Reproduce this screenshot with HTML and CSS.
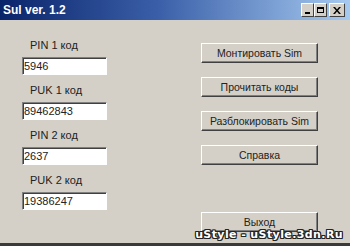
FILE: index.html
```html
<!DOCTYPE html>
<html lang="ru">
<head>
    <meta charset="UTF-8">
    <title>Sul ver. 1.2</title>
    <link rel="stylesheet" href="styles.css">
</head>
<body>
    <div class="window">
        <!-- Заголовок окна -->
        <div class="titlebar">
            <span class="title">Sul ver. 1.2</span>
            <div class="title-buttons">
                <span class="tbtn tbtn-min"><i></i></span>
                <span class="tbtn tbtn-max"><i></i></span>
                <span class="tbtn tbtn-close">
                    <svg width="8" height="7" viewBox="0 0 8 7"><path d="M0 0h2l2 2.5L6 0h2L5 3.5 8 7H6L4 4.5 2 7H0l3-3.5z" fill="#000"/></svg>
                </span>
            </div>
        </div>

        <div class="content">
            <!-- Поля с кодами -->
            <div class="fields">
                <div class="field">
                    <label>PIN 1 код</label>
                    <input class="code" type="text" value="5946">
                </div>
                <div class="field">
                    <label>PUK 1 код</label>
                    <input class="code" type="text" value="89462843">
                </div>
                <div class="field">
                    <label>PIN 2 код</label>
                    <input class="code" type="text" value="2637">
                </div>
                <div class="field">
                    <label>PUK 2 код</label>
                    <input class="code" type="text" value="19386247">
                </div>
            </div>

            <!-- Кнопки -->
            <div class="actions">
                <button class="win-button">Монтировать Sim</button>
                <button class="win-button">Прочитать коды</button>
                <button class="win-button">Разблокировать Sim</button>
                <button class="win-button">Справка</button>
                <button class="win-button exit">Выход</button>
            </div>
        </div>

        <div class="watermark">uStyle - uStyle.3dn.Ru</div>
    </div>
</body>
</html>
```

FILE: styles.css
```css
body {
    margin: 0;
    font-family: "Liberation Sans", Arial, sans-serif;
    font-size: 11px;
    background-color: #d4d0c8;
}
.window {
    position: relative;
    width: 350px;
    height: 246px;
    display: flex;
    flex-direction: column;
    background-color: #d4d0c8;
    border-bottom: 3px solid #3a3a3a;
    box-sizing: border-box;
}
.titlebar {
    height: 20px;
    display: flex;
    align-items: center;
    justify-content: space-between;
    background: linear-gradient(to right, #0a246a, #3a5fa8 45%, #a6caf0);
    padding: 0 5px 0 3px;
}
.title {
    color: #fff;
    font-weight: bold;
    font-size: 12px;
}
.title-buttons {
    display: flex;
    align-items: center;
}
.tbtn {
    width: 11px;
    height: 12px;
    background-color: #d4d0c8;
    border: 1px solid;
    border-color: #fff #404040 #404040 #fff;
    display: flex;
    align-items: center;
    justify-content: center;
}
.tbtn-min {
    align-items: flex-end;
}
.tbtn-min i {
    width: 5px;
    height: 2px;
    background: #000;
    margin-bottom: 2px;
}
.tbtn-max i {
    width: 7px;
    height: 6px;
    border: 1px solid #000;
    border-top-width: 2px;
    box-sizing: border-box;
}
.tbtn-close {
    width: 14px;
    margin-left: 2px;
}
.content {
    flex: 1;
    display: flex;
}
.fields {
    width: 85px;
    margin-left: 22px;
    padding-top: 18px;
    display: flex;
    flex-direction: column;
    gap: 8px;
}
.field {
    display: flex;
    flex-direction: column;
    gap: 5px;
}
.field label {
    height: 14px;
    line-height: 14px;
    padding-left: 8px;
    color: #222;
}
.code {
    height: 18px;
    width: 85px;
    box-sizing: border-box;
    margin: 0;
    padding: 0 1px;
    font-family: "Liberation Sans", Arial, sans-serif;
    font-size: 11px;
    color: #222;
    background: #fff;
    border: 1px solid;
    border-color: #808080 #fff #fff #808080;
    box-shadow: inset 1px 1px #404040;
    outline: none;
}
.actions {
    width: 117px;
    margin-left: 94px;
    padding: 23px 0 11px;
    display: flex;
    flex-direction: column;
    gap: 14px;
}
.win-button {
    height: 20px;
    margin: 0;
    padding: 0;
    font-family: "Liberation Sans", Arial, sans-serif;
    font-size: 10.5px;
    color: #222;
    background-color: #d4d0c8;
    border: 1px solid;
    border-color: #fff #404040 #404040 #fff;
    box-shadow: inset -1px -1px #808080;
}
.exit {
    margin-top: auto;
}
.watermark {
    position: absolute;
    right: 7px;
    bottom: 2px;
    font-family: "DejaVu Sans", sans-serif;
    font-weight: bold;
    font-size: 11px;
    letter-spacing: 0.4px;
    color: #fff;
    text-shadow: 1px 0 #222, -1px 0 #222, 0 1px #222, 0 -1px #222, 1px 1px #222, -1px -1px #222, 1px -1px #222, -1px 1px #222;
}
```
